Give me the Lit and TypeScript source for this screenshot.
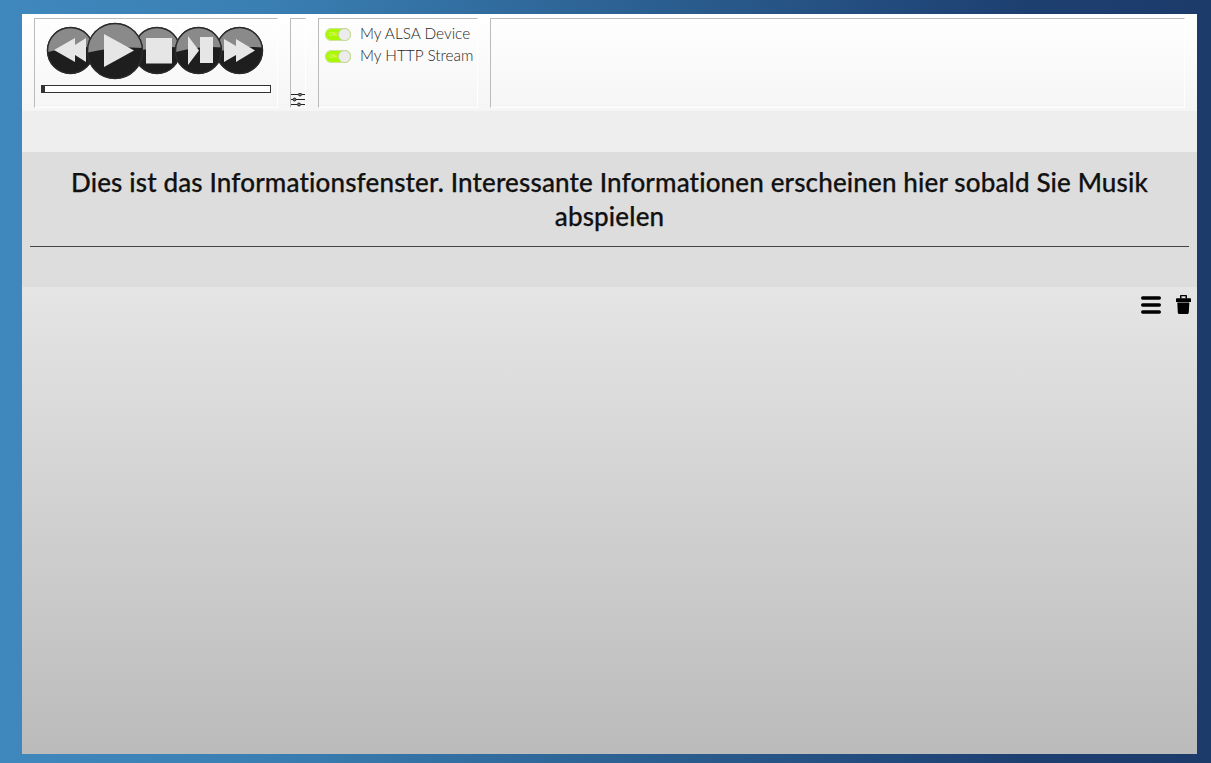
import { LitElement, html, css, svg } from "lit";
import { customElement } from "lit/decorators.js";

const disc = (cx: number, cy: number, r: number, glyph: unknown) => svg`
  <g>
    <clipPath id="c${cx}"><circle cx=${cx} cy=${cy} r=${r} /></clipPath>
    <circle cx=${cx} cy=${cy} r=${r} fill="#1e1e1e" />
    <g clip-path="url(#c${cx})">
      <path d="M${cx - r - 1} ${cy + 2}Q${cx} ${cy - 5} ${cx + r + 1} ${cy - 3}V${cy - r - 2}H${cx - r - 1}Z" fill="#8a8a8a" />
    </g>
    <circle cx=${cx} cy=${cy} r=${r - 0.5} fill="none" stroke="#2a2a2a" stroke-width="1.5" />
    ${glyph}
  </g>`;

@customElement("app-root")
export class AppRoot extends LitElement {
  static styles = css`
    :host {
      display: block;
      height: 763px;
      box-sizing: border-box;
      padding: 14px 14px 9px 22px;
      background: linear-gradient(90deg, #3f88bd 0%, #3a7fb2 22%, #1d3f70 85%, #1c3b6b 100%);
      font-family: "Lato", "Open Sans", sans-serif;
      font-variant-ligatures: none;
      overflow: hidden;
    }
    .window {
      height: 740px;
      display: flex;
      flex-direction: column;
      background: #eee;
    }
    .top {
      height: 138px;
      box-sizing: border-box;
      padding: 4px 12px 0;
      background: linear-gradient(180deg, #fff 0, #f5f5f5 97px, #eee 97px);
      display: flex;
      gap: 12px;
      align-items: flex-start;
    }
    .panel {
      height: 90px;
      box-sizing: border-box;
      border: 1px solid;
      border-color: #bbb #fff #fff #bbb;
      position: relative;
    }
    .player { width: 244px; padding: 3px 6px 0; }
    .discs { display: block; margin-left: 5px; }
    .bar {
      height: 8px;
      width: 230px;
      box-sizing: border-box;
      border: 1px solid #333;
      margin-top: 1px;
      background: #fff;
    }
    .bar i { display: block; width: 3px; height: 100%; background: #333; }
    .tune {
      width: 16px;
      display: flex;
      align-items: flex-end;
    }
    .tune svg { display: block; }
    .outputs {
      width: 160px;
      padding: 4px 0 0 6px;
      display: flex;
      flex-direction: column;
    }
    .out {
      display: flex;
      align-items: center;
      height: 22px;
      font-size: 15.4px;
      font-weight: 300;
      color: #1f1f1f;
      white-space: nowrap;
    }
    .label { padding-bottom: 2px; }
    .toggle {
      width: 26px;
      height: 13px;
      border-radius: 7px;
      background: #a8f800;
      position: relative;
      margin-right: 9px;
      flex: none;
      box-shadow: inset 0 0 0 1px #cfe3a0;
      font-size: 5px;
      line-height: 13px;
      font-weight: 400;
      color: #e8f5c8;
      padding-left: 4px;
      box-sizing: border-box;
    }
    .toggle::after {
      content: "";
      position: absolute;
      right: 1px;
      top: 1px;
      width: 11px;
      height: 11px;
      border-radius: 50%;
      background: #ececec;
      box-shadow: 0 0 0 1px #c6d6a8;
    }
    .wide { flex: 1; }
    .info {
      height: 135px;
      box-sizing: border-box;
      background: #ddd;
      padding: 13px 8px 0;
      color: #111;
    }
    h1 {
      margin: 0;
      text-align: center;
      font-size: 26px;
      line-height: 34px;
      font-weight: 500;
      letter-spacing: 0.15px;
      -webkit-text-stroke: 0.25px #111;
    }
    hr {
      margin: 13px 0 0;
      border: 0;
      height: 1px;
      background: #444;
    }
    .list {
      flex: 1;
      background: linear-gradient(180deg, #e5e5e5 0%, #bbb 100%);
      display: flex;
      justify-content: flex-end;
      gap: 15px;
      padding: 8px 6px 0 0;
    }
    .list svg { display: block; }
  `;

  render() {
    const w = "#e6e6e6";
    return html`
      <div class="window">
        <div class="top">
          <div class="panel player">
            <svg class="discs" width="220" height="62" viewBox="46 22 220 62">
              ${disc(70.5, 50.5, 23.5, svg`<path d="M54 50 75 38V45L86 38V62L75 55V62Z" fill=${w} />`)}
              ${disc(157, 50.5, 23.5, svg`<rect x="146" y="38" width="26" height="25.500" fill=${w} />`)}
              ${disc(239.5, 50.5, 23.5, svg`<path d="M224 39 236 46V39L255 50.500 236 62V55L224 62Z" fill=${w} />`)}
              ${disc(115, 51, 28, svg`<path d="M104 34 134 50.500 104 67Z" fill=${w} />`)}
              ${disc(198.5, 50.5, 23.5, svg`<path d="M188 36 199 50.500 188 65ZM200 37H213V63H200Z" fill=${w} />`)}
            </svg>
            <div class="bar"><i></i></div>
          </div>
          <div class="panel tune">
            <svg width="14" height="14" viewBox="0 0 14 14" fill="none" stroke="#222">
              <path d="M0 1.500H7M11 1.500H14M0 6.500H2M5 6.500H14M0 11.500H6M10 11.500H14" stroke-width="1" />
              <circle cx="9" cy="1.500" r="1.500" fill="#777" />
              <circle cx="3.500" cy="6.500" r="1.500" fill="#777" />
              <circle cx="8" cy="11.500" r="1.500" fill="#777" />
            </svg>
          </div>
          <div class="panel outputs">
            <div class="out"><span class="toggle">ON</span><span class="label">My ALSA Device</span></div>
            <div class="out"><span class="toggle">ON</span><span class="label">My HTTP Stream</span></div>
          </div>
          <div class="panel wide"></div>
        </div>
        <div class="info">
          <h1>Dies ist das Informationsfenster. Interessante Informationen erscheinen hier sobald Sie Musik abspielen</h1>
          <hr />
        </div>
        <div class="list">
          <svg width="20" height="21" viewBox="0 0 20 21" fill="none" stroke="#000" stroke-width="3.4" stroke-linecap="round">
            <path d="M1.700 3H18.300M1.700 10H18.300M1.700 17H18.300" />
          </svg>
          <svg width="15" height="21" viewBox="0 0 15 21" fill="#000">
            <path d="M4 3.400V1C4 .4 4.400 0 5 0H10C10.600 0 11 .4 11 1V3.400H9.500V1.300H5.500V3.400Z" />
            <path d="M1 3.300H14C14.600 3.300 15 3.800 15 4.300V7H0V4.300C0 3.800 .4 3.300 1 3.300Z" />
            <path d="M1.300 7.500H13.300L12.800 17.500C12.700 18.300 12.200 19 11.400 19H3.200C2.400 19 1.900 18.300 1.800 17.500Z" />
          </svg>
        </div>
      </div>
    `;
  }
}
